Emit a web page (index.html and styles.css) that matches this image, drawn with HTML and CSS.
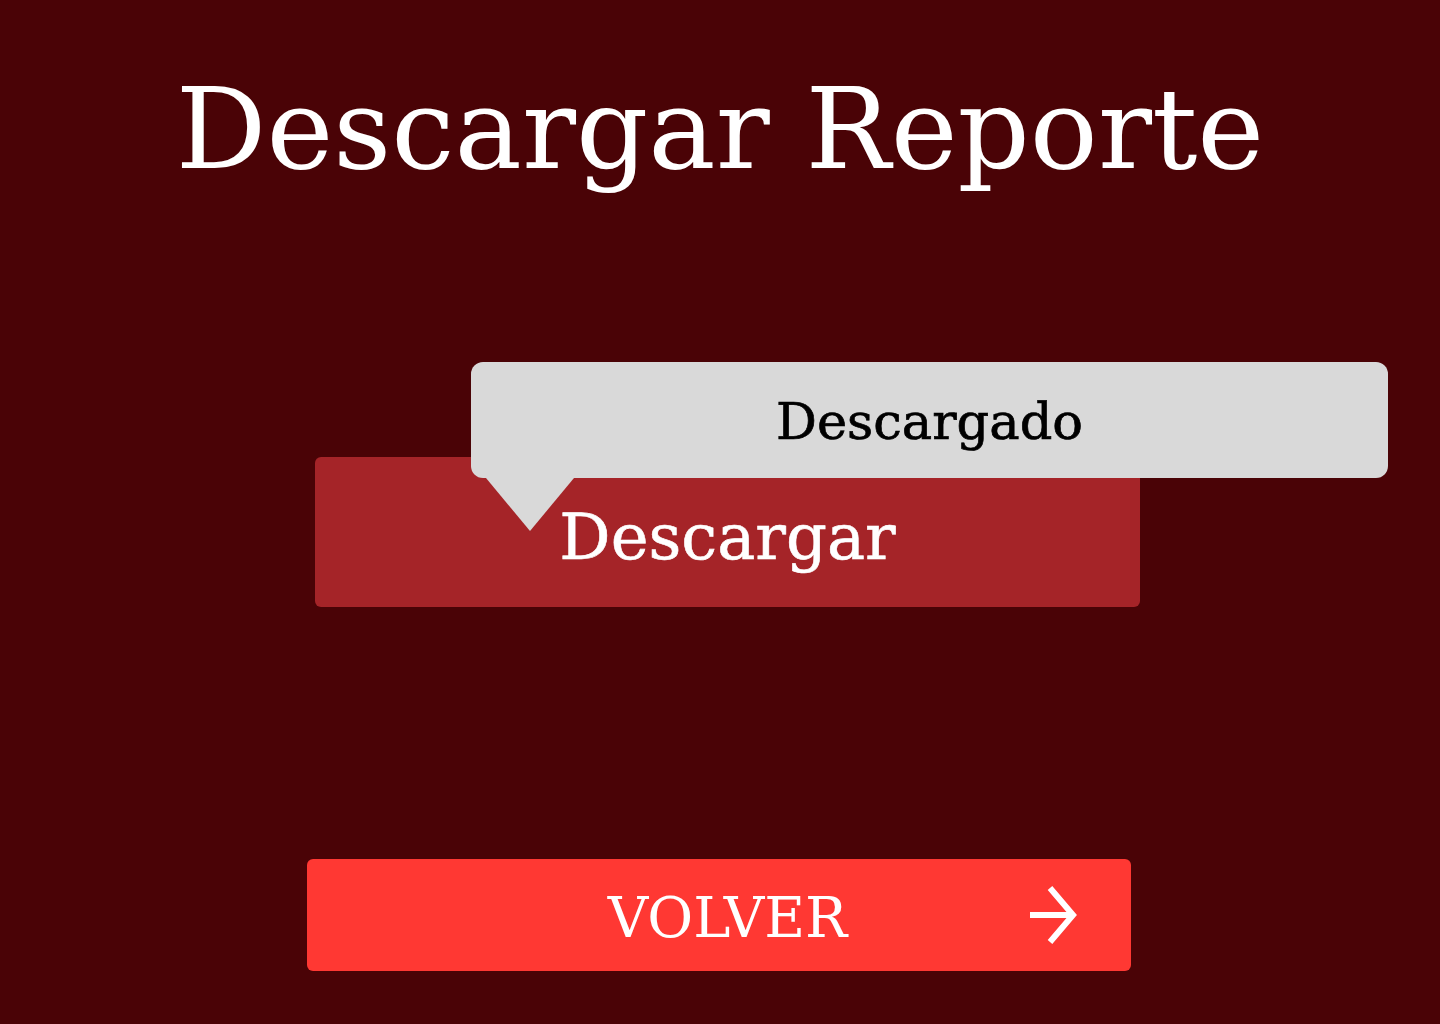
FILE: index.html
```html
<!DOCTYPE html>
<html lang="es">
<head>
<meta charset="utf-8">
<title>Descargar Reporte</title>
<link rel="stylesheet" href="styles.css">
</head>
<body>
<main class="page">
  <h1 class="title">Descargar Reporte</h1>
  <div class="download-wrap">
    <button class="btn-download" type="button">Descargar</button>
    <div class="tooltip">
      <span class="tooltip-text">Descargado</span>
      <span class="tooltip-tail"></span>
    </div>
  </div>
  <button class="btn-back" type="button">
    <span class="btn-back-label">VOLVER</span>
    <svg class="btn-back-icon" width="50" height="64" viewBox="0 0 50 64" aria-hidden="true">
      <line x1="3" y1="31" x2="44" y2="31" stroke="#fff" stroke-width="6"/>
      <polyline points="23,4 46,31 23,58" fill="none" stroke="#fff" stroke-width="6"/>
    </svg>
  </button>
</main>
</body>
</html>
```
FILE: styles.css
```css
html, body {
  margin: 0;
  padding: 0;
}
body {
  background: #4a0306;
  width: 1440px;
  height: 1024px;
  overflow: hidden;
  font-family: "DejaVu Serif", "Liberation Serif", serif;
}
.page {
  display: flex;
  flex-direction: column;
  align-items: flex-start;
}
.title {
  align-self: stretch;
  margin: 0;
  padding-top: 59px;
  text-align: center;
  color: #fff;
  font-weight: 400;
  font-size: 113px;
  line-height: 140px;
}
.download-wrap {
  position: relative;
  margin-top: 258px;
  margin-left: 315px;
}
.btn-download {
  display: block;
  width: 825px;
  height: 150px;
  border: 0;
  border-radius: 6px;
  background: #a52428;
  color: #fff;
  font-family: inherit;
  font-size: 64px;
  padding: 0;
  padding-top: 10px;
  -webkit-text-stroke: 0.6px #fff;
  cursor: pointer;
}
.tooltip {
  position: absolute;
  left: 156px;
  top: -95px;
  width: 917px;
  height: 116px;
  background: #d9d9d9;
  border-radius: 12px;
  display: flex;
  align-items: center;
  justify-content: center;
}
.tooltip-text {
  color: #000;
  font-size: 51px;
  font-weight: 400;
  -webkit-text-stroke: 0.7px #000;
  padding-top: 3px;
}
.tooltip-tail {
  position: absolute;
  left: 15px;
  top: 100%;
  width: 88px;
  height: 53px;
  background: #d9d9d9;
  clip-path: polygon(0 0, 100% 0, 50% 100%);
}
.btn-back {
  position: relative;
  display: flex;
  align-items: center;
  justify-content: center;
  margin-top: 252px;
  margin-left: 307px;
  width: 824px;
  height: 112px;
  border: 0;
  border-radius: 6px;
  background: #ff3833;
  color: #fff;
  font-family: inherit;
  font-size: 56px;
  padding: 4px 0 0 17px;
  cursor: pointer;
}
.btn-back-icon {
  position: absolute;
  right: 54px;
  top: 25px;
}
```
